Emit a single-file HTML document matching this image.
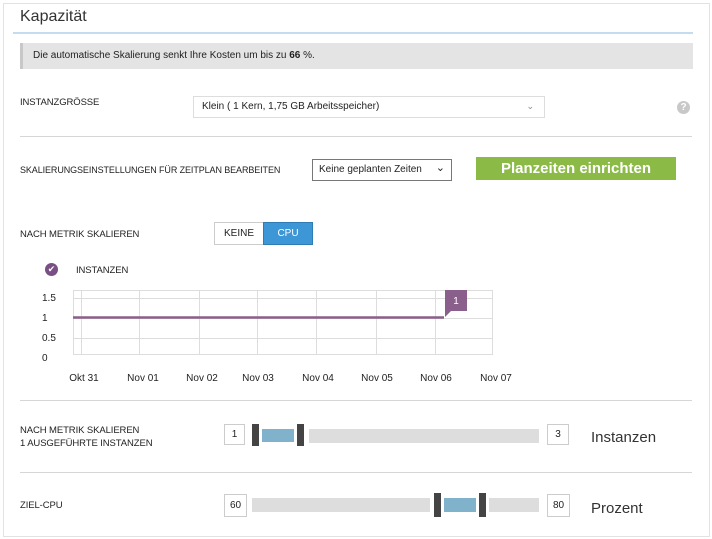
<html><head><style>
body{margin:0;width:712px;height:539px;background:#fff;font-family:"Liberation Sans",sans-serif;color:#222;position:relative;overflow:hidden}
.a{position:absolute}
.lbl{font-size:9.5px;color:#222;letter-spacing:-0.1px}
.hr{position:absolute;height:1px;background:#d6d6d6}
.box{position:absolute;border:1px solid #ccc;background:#fff;font-size:10px;text-align:center;line-height:20px}
.g{position:absolute;background:#ddd}
</style></head><body>
<div class="a" style="left:3px;top:3px;width:705px;height:532px;border:1px solid #e2e2e2"></div>
<div class="a" style="left:20px;top:8px;font-size:16px;color:#333">Kapazität</div>
<div class="a" style="left:13px;top:32px;width:680px;height:2px;background:#c5dcef"></div>
<div class="a" style="left:20px;top:43px;width:673px;height:26px;background:#e4e4e4;border-left:3px solid #c8c8c8;box-sizing:border-box"></div>
<div class="a" style="left:33px;top:50px;font-size:10px">Die automatische Skalierung senkt Ihre Kosten um bis zu <b>66</b> %.</div>
<div class="a lbl" style="left:20px;top:97px">INSTANZGRÖSSE</div>
<div class="a" style="left:193px;top:96px;width:352px;height:22px;border:1px solid #ddd;box-sizing:border-box;font-size:10px;line-height:20px;padding-left:8px">Klein ( 1 Kern, 1,75 GB Arbeitsspeicher)<span style="position:absolute;right:10px;top:-1px;color:#888;font-size:9px">⌄</span></div>
<div class="a" style="left:677px;top:101px;width:13px;height:13px;border-radius:50%;background:#c8c8c8;color:#fff;font-size:10px;text-align:center;line-height:13px;font-weight:bold">?</div>
<div class="hr" style="left:20px;top:136px;width:672px"></div>
<div class="a lbl" style="left:20px;top:165px;font-size:9px">SKALIERUNGSEINSTELLUNGEN FÜR ZEITPLAN BEARBEITEN</div>
<div class="a" style="left:312px;top:159px;width:140px;height:22px;border:1px solid #777;box-sizing:border-box;font-size:10px;line-height:20px;padding-left:6px">Keine geplanten Zeiten<span style="position:absolute;right:6px;top:-2px;font-size:11px">⌄</span></div>
<div class="a" style="left:476px;top:157px;width:200px;height:23px;background:#8bbb46;color:#fff;font-size:15px;font-weight:bold;text-align:center;line-height:23px">Planzeiten einrichten</div>
<div class="a lbl" style="left:20px;top:229px">NACH METRIK SKALIEREN</div>
<div class="a" style="left:214px;top:222px;width:50px;height:23px;border:1px solid #ccc;box-sizing:border-box;font-size:10px;text-align:center;line-height:21px">KEINE</div>
<div class="a" style="left:263px;top:222px;width:50px;height:23px;background:#3d96d6;border:1px solid #2f7cb5;box-sizing:border-box;font-size:10px;color:#fff;text-align:center;line-height:21px">CPU</div>
<div class="a" style="left:45px;top:263px;width:13px;height:13px;border-radius:50%;background:#7a4f84;color:#fff;font-size:9px;text-align:center;line-height:13px">✔</div>
<div class="a lbl" style="left:76px;top:265px">INSTANZEN</div>
<svg class="a" style="left:0;top:0" width="712" height="539">
<g stroke="#ddd" stroke-width="1" fill="none">
<rect x="73.5" y="290.5" width="419" height="64"/>
<line x1="73" y1="298.5" x2="492" y2="298.5"/><line x1="73" y1="318.5" x2="492" y2="318.5"/><line x1="73" y1="338.5" x2="492" y2="338.5"/>
<line x1="81.5" y1="290" x2="81.5" y2="354"/><line x1="139.5" y1="290" x2="139.5" y2="354"/><line x1="199.5" y1="290" x2="199.5" y2="354"/><line x1="257.5" y1="290" x2="257.5" y2="354"/><line x1="316.5" y1="290" x2="316.5" y2="354"/><line x1="376.5" y1="290" x2="376.5" y2="354"/><line x1="435.5" y1="290" x2="435.5" y2="354"/>
</g>
<line x1="73" y1="317.5" x2="444" y2="317.5" stroke="#8b5f8b" stroke-width="2.5"/>
<path d="M445 290h22v21h-16l-6 6z" fill="#8b5f8b"/>
<text x="456" y="304" fill="#fff" font-size="10" text-anchor="middle" font-family="Liberation Sans">1</text>
<g font-size="10" fill="#222" font-family="Liberation Sans">
<text x="42" y="301">1.5</text><text x="42" y="321">1</text><text x="42" y="341">0.5</text><text x="42" y="361">0</text>
<g text-anchor="middle"><text x="84" y="381">Okt 31</text><text x="143" y="381">Nov 01</text><text x="202" y="381">Nov 02</text><text x="258" y="381">Nov 03</text><text x="318" y="381">Nov 04</text><text x="377" y="381">Nov 05</text><text x="436" y="381">Nov 06</text><text x="496" y="381">Nov 07</text></g>
</g>
</svg>
<div class="hr" style="left:20px;top:400px;width:672px"></div>
<div class="a lbl" style="left:20px;top:424px;line-height:13px">NACH METRIK SKALIEREN<br>1 AUSGEFÜHRTE INSTANZEN</div>
<div class="box" style="left:224px;top:424px;width:21px;height:21px;box-sizing:border-box">1</div>
<div class="a" style="left:252px;top:424px;width:7px;height:22px;background:#444"></div>
<div class="a" style="left:262px;top:429px;width:32px;height:13px;background:#80b2cc"></div>
<div class="a" style="left:297px;top:424px;width:7px;height:22px;background:#444"></div>
<div class="g" style="left:309px;top:429px;width:230px;height:14px"></div>
<div class="box" style="left:547px;top:424px;width:22px;height:21px;box-sizing:border-box">3</div>
<div class="a" style="left:591px;top:429px;font-size:15px;color:#333">Instanzen</div>
<div class="hr" style="left:20px;top:472px;width:672px"></div>
<div class="a lbl" style="left:20px;top:500px">ZIEL-CPU</div>
<div class="box" style="left:224px;top:494px;width:23px;height:23px;box-sizing:border-box;line-height:21px">60</div>
<div class="g" style="left:252px;top:498px;width:178px;height:14px"></div>
<div class="a" style="left:434px;top:493px;width:7px;height:24px;background:#444"></div>
<div class="a" style="left:444px;top:498px;width:32px;height:14px;background:#80b2cc"></div>
<div class="a" style="left:479px;top:493px;width:7px;height:24px;background:#444"></div>
<div class="g" style="left:489px;top:498px;width:50px;height:14px"></div>
<div class="box" style="left:547px;top:494px;width:23px;height:23px;box-sizing:border-box;line-height:21px">80</div>
<div class="a" style="left:591px;top:500px;font-size:15px;color:#333">Prozent</div>
</body></html>
